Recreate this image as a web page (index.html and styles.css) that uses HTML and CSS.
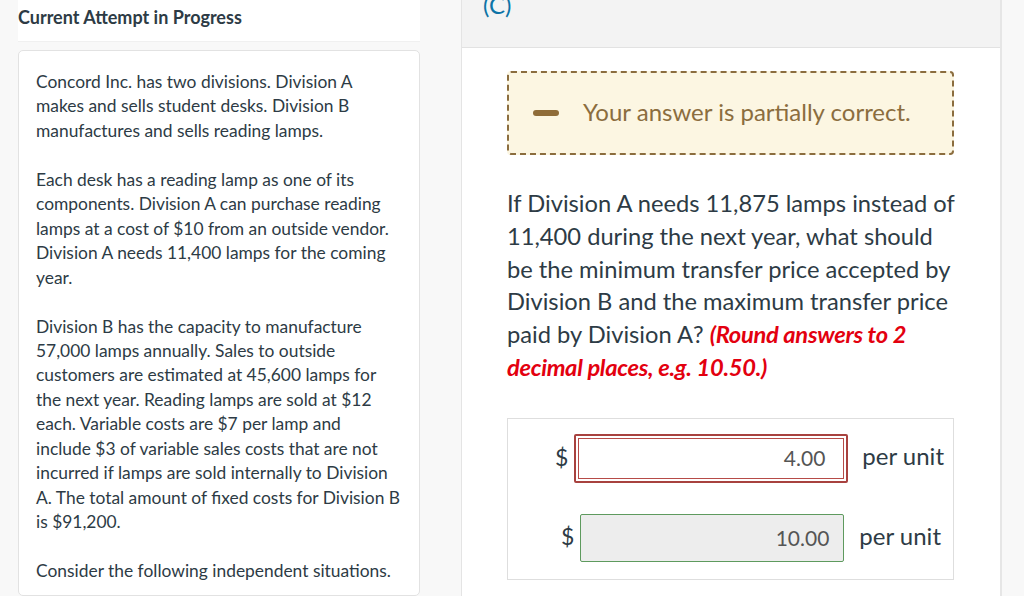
FILE: index.html
```html
<!DOCTYPE html>
<html>
<head>
<meta charset="utf-8">
<link rel="stylesheet" href="styles.css">
</head>
<body>
<div class="page">
  <section class="left">
    <header class="attempt-head">Current Attempt in Progress</header>
    <div class="card">
      <p>Concord Inc. has two divisions. Division A makes and sells student desks. Division B manufactures and sells reading lamps.</p>
      <p>Each desk has a reading lamp as one of its components. Division A can purchase reading lamps at a cost of $10 from an outside vendor. Division A needs 11,400 lamps for the coming year.</p>
      <p>Division B has the capacity to manufacture 57,000 lamps annually. Sales to outside customers are estimated at 45,600 lamps for the next year. Reading lamps are sold at $12 each. Variable costs are $7 per lamp and<br>include $3 of variable sales costs that are not incurred if lamps are sold internally to Division A. The total amount of fixed costs for Division B is $91,200.</p>
      <p>Consider the following independent situations.</p>
    </div>
  </section>
  <section class="right">
    <header class="part-head"><span class="part-label">(c)</span></header>
    <div class="part-body">
      <div class="feedback">
        <span class="minus"></span>
        <span class="feedback-text">Your answer is partially correct.</span>
      </div>
      <p class="question">If Division A needs 11,875 lamps instead of 11,400 during the next year, what should be the minimum transfer price accepted by Division B and the maximum transfer price paid by Division A? <em class="hint">(Round answers to 2 decimal places, e.g. 10.50.)</em></p>
      <div class="answers">
        <div class="row row-wrong">
          <span class="cur">$</span>
          <span class="wrong-frame"><span class="field field-wrong">4.00</span></span>
          <span class="unit">per unit</span>
        </div>
        <div class="row row-right">
          <span class="cur">$</span>
          <span class="field field-right">10.00</span>
          <span class="unit">per unit</span>
        </div>
      </div>
    </div>
  </section>
</div>
</body>
</html>
```

FILE: styles.css
```css
* { box-sizing: border-box; }
html, body {
  margin: 0;
  padding: 0;
}
body {
  background: #f8f8f8;
  font-family: Lato, "Open Sans", sans-serif;
  color: #2d3b45;
  width: 1024px;
  height: 596px;
  overflow: hidden;
}
.page {
  display: flex;
  align-items: flex-start;
  gap: 41px;
  padding-left: 18px;
  height: 596px;
  overflow: hidden;
}
.left {
  width: 402px;
  flex: none;
}
.attempt-head {
  background: #fff;
  height: 42px;
  padding: 6px 0 0 0;
  font-size: 18px;
  font-weight: 700;
  line-height: 22px;
  border-bottom: 1px solid #f0f0f0;
}
.card {
  margin-top: 8px;
  background: #fff;
  border: 1px solid #e2e2e2;
  border-radius: 5px;
  padding: 19px 16px 0 17px;
  font-size: 17.4px;
  line-height: 24.45px;
  height: 546px;
  overflow: hidden;
}
.card p {
  margin: 0 0 24.45px 0;
}
.right {
  width: 541px;
  flex: none;
  background: #fff;
  border-left: 1px solid #e4e4e4;
  border-right: 2px solid #e6e6e6;
  height: 596px;
}
.part-head {
  height: 48px;
  background: #f3f3f3;
  border-bottom: 1px solid #e2e2e2;
  overflow: hidden;
}
.part-label {
  display: block;
  margin-top: -10px;
  padding-left: 21px;
  font-size: 24px;
  line-height: 30px;
  color: #0d73a6;
  text-transform: uppercase;
}
.part-body {
  padding: 23px 42px 0 45px;
}
.feedback {
  display: flex;
  align-items: center;
  width: 447px;
  height: 84px;
  border: 2px dashed #8b6d3e;
  border-radius: 4px;
  background: #fcf6e2;
  padding-left: 24px;
}
.minus {
  width: 26px;
  height: 6px;
  border-radius: 3px;
  background: #8f6c38;
  margin-right: 24px;
}
.feedback-text {
  font-size: 24px;
  color: #8b6d3e;
  padding-bottom: 3px;
}
.question {
  margin: 32px 0 0 0;
  font-size: 23.7px;
  line-height: 32.8px;
}
.hint {
  color: #e3000f;
  font-weight: 700;
  font-style: italic;
  letter-spacing: -0.3px;
}
.answers {
  width: 447px;
  margin-top: 34px;
  border: 1px solid #dedede;
  height: 162px;
  padding-top: 15px;
}
.row {
  display: flex;
  align-items: center;
}
.cur {
  font-size: 23px;
  color: #2d3b45;
  padding-bottom: 3px;
}
.unit {
  font-size: 24px;
  color: #2d3b45;
  padding-bottom: 5px;
}
.field {
  display: block;
  font-size: 21px;
  color: #555;
  text-align: right;
}
.row-wrong .cur {
  margin-left: 47px;
  margin-right: 6px;
}
.wrong-frame {
  display: block;
  border: 2px solid #a8423f;
  padding: 2px;
  border-radius: 2px;
}
.field-wrong {
  width: 266px;
  height: 41px;
  line-height: 37px;
  border: 1.5px solid #b64b48;
  background: #fff;
  padding-right: 18px;
}
.row-wrong .unit {
  margin-left: 14px;
}
.row-right {
  margin-top: 31px;
}
.row-right .cur {
  margin-left: 53px;
  margin-right: 6px;
}
.field-right {
  width: 264px;
  height: 48px;
  line-height: 45px;
  border: 1px solid #5e9a5e;
  background: #ededed;
  border-radius: 2px;
  padding-right: 14px;
}
.row-right .unit {
  margin-left: 15px;
}
```
